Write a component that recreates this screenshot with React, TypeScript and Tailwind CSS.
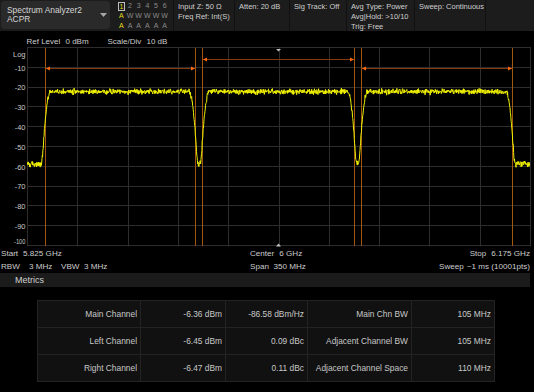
import React from "react";

function mulberry32(a: number) {
  return function () {
    a |= 0;
    a = (a + 0x6d2b79f5) | 0;
    let t = Math.imul(a ^ (a >>> 15), 1 | a);
    t = (t + Math.imul(t ^ (t >>> 7), 61 | t)) ^ t;
    return ((t ^ (t >>> 14)) >>> 0) / 4294967296;
  };
}

const PX0 = 27;
const PX1 = 530;
const DIVX = (PX1 - PX0) / 10;
const DIVY = 19.8;

function buildTrace(): string {
  const rnd = mulberry32(20240611);
  const g = () => (rnd() + rnd() + rnd() - 1.5) * 2;
  const chans: [number, number][] = [
    [51, 188.5],
    [209.7, 347.2],
    [368, 505.5],
  ];
  const pts: string[] = [];
  for (let x = PX0; x <= PX1; x += 0.3) {
    let lin = 0;
    for (const [s, e] of chans) {
      let d = 0;
      if (x < s) d = s - x;
      else if (x > e) d = x - e;
      const drop = 0.326 * d * d + 0.0205 * d * d * d;
      if (drop < 90) lin += Math.pow(10, (-22 - drop) / 10);
    }
    lin += Math.pow(10, -58.5 / 10);
    let db = 10 * Math.log10(lin);
    const inCh = db > -40;
    db += g() * (inCh ? 0.65 : 0.85);
    const y = 1 + (-db / 10) * DIVY;
    pts.push(`${x.toFixed(2)},${y.toFixed(2)}`);
  }
  return pts.join(" ");
}

const yLabels = ["-10", "-20", "-30", "-40", "-50", "-60", "-70", "-80", "-90"];

function Chart() {
  const trace = React.useMemo(buildTrace, []);
  const vx = Array.from({ length: 11 }, (_, k) => Math.round(PX0 + k * DIVX) + 0.5);
  const hy = Array.from({ length: 11 }, (_, k) => Math.round(1 + k * DIVY) - 0.5);
  const orangeV = [45.5, 195.5, 202.5, 354.5, 361.5, 512.5];
  const bars: { a: number; b: number; y: number }[] = [
    { a: 45.5, b: 195.5, y: 21.5 },
    { a: 202.5, b: 354.5, y: 12.5 },
    { a: 361.5, b: 512.5, y: 21.5 },
  ];
  return (
    <svg width="534" height="200" className="block">
      <defs>
        <clipPath id="plotclip">
          <rect x={PX0} y={0} width={PX1 - PX0} height={200} />
        </clipPath>
      </defs>
      {vx.map((x, i) => (
        <line key={"v" + i} x1={x} y1={0.5} x2={x} y2={199.5} stroke="#2d2d2d" strokeWidth={1} />
      ))}
      {hy.map((y, i) => (
        <line key={"h" + i} x1={PX0} y1={y} x2={PX1 + 1} y2={y} stroke="#2d2d2d" strokeWidth={1} />
      ))}
      <text x={25.5} y={10} fill="#c8c8c8" fontSize={7.5} textAnchor="end" fontFamily="'Liberation Sans', Arial, sans-serif">
        Log
      </text>
      {yLabels.map((l, i) => (
        <text
          key={l}
          x={25.5}
          y={1 + (i + 1) * DIVY + 2.7}
          fill="#c8c8c8"
          fontSize={7.5}
          textAnchor="end"
          fontFamily="'Liberation Sans', Arial, sans-serif"
        >
          {l}
        </text>
      ))}
      <text
        x={14}
        y={196.5}
        fill="#c8c8c8"
        fontSize={7.5}
        textLength={11.5}
        lengthAdjust="spacingAndGlyphs"
        fontFamily="'Liberation Sans', Arial, sans-serif"
      >
        -100
      </text>
      {orangeV.map((x, i) => (
        <line key={"o" + i} x1={x} y1={1} x2={x} y2={199} stroke="#a4580f" strokeWidth={1} />
      ))}
      {bars.map((b, i) => (
        <g key={"b" + i}>
          <line x1={b.a} y1={b.y} x2={b.b} y2={b.y} stroke="#86390b" strokeWidth={1} />
          <polygon points={`${b.a + 0.5},${b.y} ${b.a + 4.5},${b.y - 2} ${b.a + 4.5},${b.y + 2}`} fill="#ff6a10" />
          <polygon points={`${b.b - 0.5},${b.y} ${b.b - 4.5},${b.y - 2} ${b.b - 4.5},${b.y + 2}`} fill="#ff6a10" />
        </g>
      ))}
      <polyline
        points={trace}
        fill="none"
        stroke="#f2f200"
        strokeWidth={1}
        strokeLinejoin="round"
        clipPath="url(#plotclip)"
      />
      <polygon points="276,2 281,2 278.5,4.5" fill="#bdbdbd" />
      <polygon points="276,199.5 281,199.5 278.5,196.5" fill="#bdbdbd" />
    </svg>
  );
}

function Header() {
  const cols = [
    { w: "w-[61px]", lines: ["Input Z: 50 Ω", "Freq Ref: Int(S)"] },
    { w: "w-[55px]", lines: ["Atten: 20 dB"] },
    { w: "w-[57px]", lines: ["Sig Track: Off"] },
    { w: "w-[68px]", lines: ["Avg Type: Power", "Avg|Hold: >10/10", "Trig: Free"] },
    { w: "w-[71px]", lines: ["Sweep: Continuous"] },
  ];
  const y = "text-[#e3dc1c]";
  const gr = "text-[#8a8a8a]";
  return (
    <div className="flex h-[31px] bg-[#1c1c1c]">
      <div className="flex w-[173px] shrink-0">
        <div className="ml-[1px] mt-[1px] flex h-[28px] w-[109px] items-center rounded-[4px] bg-[#2a2a2a] pl-[6px] pr-[3px]">
          <div className="flex flex-1 flex-col text-[8.4px] leading-[9px] text-[#d6d6d6]">
            <span>Spectrum Analyzer2</span>
            <span>ACPR</span>
          </div>
          <svg width="7" height="4" className="mb-[1px]">
            <path d="M0 0H7L3.5 4Z" fill="#a8a8a8" />
          </svg>
        </div>
        <div className="ml-[7px] grid h-[30px] w-[52px] grid-cols-6 pt-[1px] text-center text-[7px] leading-[10px]">
          <span className="flex items-center justify-center">
            <span className="inline-block h-[9px] w-[7px] border border-[#bdbdbd] text-[#e3dc1c] leading-[7px]">1</span>
          </span>
          <span className={gr}>2</span>
          <span className={gr}>3</span>
          <span className={gr}>4</span>
          <span className={gr}>5</span>
          <span className={gr}>6</span>
          <span className={y}>A</span>
          <span className={gr}>W</span>
          <span className={gr}>W</span>
          <span className={gr}>W</span>
          <span className={gr}>W</span>
          <span className={gr}>W</span>
          <span className={y}>A</span>
          <span className={gr}>A</span>
          <span className={gr}>A</span>
          <span className={gr}>A</span>
          <span className={gr}>A</span>
          <span className={gr}>A</span>
        </div>
      </div>
      {cols.map((c, i) => (
        <div
          key={i}
          className={`${c.w} flex shrink-0 flex-col border-l border-[#111111] pl-[4px] pt-[1.5px] text-[7.5px] leading-[10px] text-[#cfcfcf]`}
        >
          {c.lines.map((l) => (
            <span key={l} className="whitespace-nowrap">
              {l}
            </span>
          ))}
        </div>
      ))}
      <div className="flex-1 border-l border-[#111111]" />
    </div>
  );
}

const rows = [
  ["Main Channel", "-6.36 dBm", "-86.58 dBm/Hz", "Main Chn BW", "105 MHz"],
  ["Left Channel", "-6.45 dBm", "0.09 dBc", "Adjacent Channel BW", "105 MHz"],
  ["Right Channel", "-6.47 dBm", "0.11 dBc", "Adjacent Channel Space", "110 MHz"],
];

export default function App() {
  return (
    <div className="h-[392px] w-[534px] overflow-hidden bg-black font-['Liberation_Sans',Arial,sans-serif] text-[#cccccc]">
      <Header />
      <div className="flex h-[16px] pt-[6px] text-[8px] leading-[10px] text-[#cccccc]">
        <span className="ml-[26.5px] w-[39px]">Ref Level</span>
        <span className="w-[42px]">0 dBm</span>
        <span className="w-[39px]">Scale/Div</span>
        <span>10 dB</span>
      </div>
      <Chart />
      <div className="flex h-[13px] w-[530px] text-[8.1px] leading-[13px] text-[#cccccc]">
        <div className="flex w-[250px] pl-[1px]">
          <span>Start</span>
          <span className="ml-[5px]">5.825 GHz</span>
        </div>
        <div className="flex flex-1">
          <span>Center</span>
          <span className="ml-[5px]">6 GHz</span>
        </div>
        <div className="flex">
          <span>Stop</span>
          <span className="ml-[5px]">6.175 GHz</span>
        </div>
      </div>
      <div className="flex h-[13px] w-[530px] text-[8.1px] leading-[13px] text-[#cccccc]">
        <div className="flex w-[250px] pl-[1px]">
          <span className="w-[28px]">RBW</span>
          <span className="w-[32px]">3 MHz</span>
          <span className="w-[23px]">VBW</span>
          <span>3 MHz</span>
        </div>
        <div className="flex flex-1">
          <span>Span</span>
          <span className="ml-[4.5px]">350 MHz</span>
        </div>
        <div className="flex">
          <span>Sweep</span>
          <span className="ml-[3px]">~1 ms (10001pts)</span>
        </div>
      </div>
      <div className="h-[14px] w-[530px] bg-[#1b1b1b] pl-[15px] text-[9px] leading-[14px] text-[#d0d0d0]">Metrics</div>
      <div className="ml-[37px] mt-[13px] grid w-[458px] grid-cols-[102px_84px_81px_103px_82px] gap-px bg-[#232323] p-px text-[8.4px] text-[#c8c8c8]">
        {rows.flatMap((r, i) =>
          r.map((c, j) => (
            <div key={i + "-" + j} className="flex h-[26px] items-center justify-end bg-[#111111] pr-[3px] whitespace-nowrap">
              {c}
            </div>
          ))
        )}
      </div>
    </div>
  );
}
